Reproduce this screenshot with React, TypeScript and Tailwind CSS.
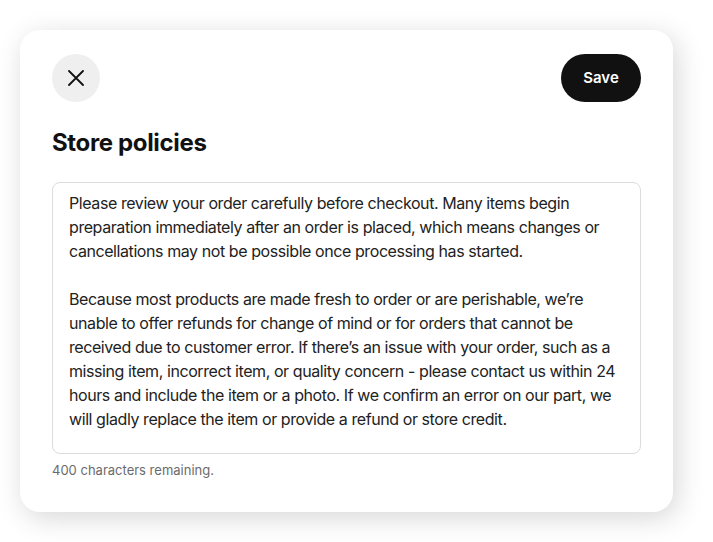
import React, { useState } from 'react';

const POLICY_TEXT =
  'Please review your order carefully before checkout. Many items begin preparation immediately after an order is placed, which means changes or cancellations may not be possible once processing has started.\n\n' +
  'Because most products are made fresh to order or are perishable, we\u2019re unable to offer refunds for change of mind or for orders that cannot be received due to customer error. If there\u2019s an issue with your order, such as a missing item, incorrect item, or quality concern - please contact us within 24 hours and include the item or a photo. If we confirm an error on our part, we will gladly replace the item or provide a refund or store credit.';

export default function App() {
  const [text, setText] = useState(POLICY_TEXT);

  return (
    <div
      className="min-h-screen bg-white pl-[20px] pt-[30px]"
      style={{ fontFamily: 'Inter, "Noto Sans", sans-serif' }}
    >
      <div className="w-[653px] rounded-[20px] bg-white px-8 pt-6 pb-8 shadow-[4px_6px_28px_rgba(0,0,0,0.16)]">
        {/* Header */}
        <div className="flex items-center justify-between">
          <button className="flex h-12 w-12 items-center justify-center rounded-full bg-[#efefef] text-[#111]">
            <svg width="16" height="16" viewBox="0 0 16 16" fill="none" stroke="currentColor" strokeWidth="1.8" strokeLinecap="round">
              <path d="M1 1L15 15M15 1L1 15" />
            </svg>
          </button>
          <button className="h-12 w-20 rounded-full bg-[#111] text-[15px] font-semibold text-white">
            Save
          </button>
        </div>

        <h1 className="mt-[26px] text-[24px] font-bold leading-[30px] tracking-[-0.35px] text-[#111]">
          Store policies
        </h1>

        <textarea
          value={text}
          onChange={(e) => setText(e.target.value)}
          className="mt-[24px] block h-[272px] w-full resize-none rounded-lg border border-[#dcdcdc] px-4 pt-2 text-[16px] leading-6 tracking-[-0.42px] text-[#222] outline-none"
        />

        <p className="mt-[6px] text-[13px] leading-5 text-[#6b6b6b]">
          {400} characters remaining.
        </p>
      </div>
    </div>
  );
}
